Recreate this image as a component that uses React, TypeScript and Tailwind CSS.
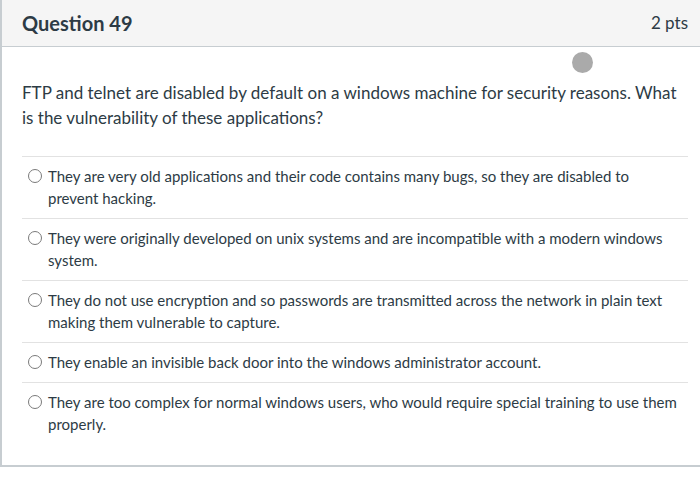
const options = [
  "They are very old applications and their code contains many bugs, so they are disabled to prevent hacking.",
  "They were originally developed on unix systems and are incompatible with a modern windows system.",
  "They do not use encryption and so passwords are transmitted across the network in plain text making them vulnerable to capture.",
  "They enable an invisible back door into the windows administrator account.",
  "They are too complex for normal windows users, who would require special training to use them properly.",
]

export default function App() {
  return (
    <main className="h-[494px] w-[700px] overflow-hidden bg-white font-['Lato',sans-serif] text-[#2d3b45]">
      <div className="w-[720px] border-b-2 border-l-2 border-[#c7cdd1]">
        <div className="flex h-[47px] w-[700px] items-center justify-between border-b border-[#c7cdd1] bg-[#f5f5f5] pl-[20px] pr-[14px]">
          <h1 className="text-[20px] font-bold">Question 49</h1>
          <span className="text-[17px]">2 pts</span>
        </div>

        <div className="relative pl-[20px] pr-[32px] pb-[21px]">
          <div className="absolute left-[570px] top-[5px] h-[21px] w-[21px] rounded-full bg-[#aaaaaa]" />
          <p className="w-[666px] pt-[33px] text-[17px] leading-[25px]">
            FTP and telnet are disabled by default on a windows machine for security reasons. What is the
            vulnerability of these applications?
          </p>

          <div className="mt-[26px] w-[666px]">
            {options.map((opt, i) => (
              <div key={i} className="flex gap-[6px] border-t border-[#e2e2e2] pl-[6px] pt-[8px] pb-[9px]">
                <span className="mt-[4px] h-[14px] w-[14px] shrink-0 rounded-full border-[1.5px] border-[#7a7a7a]" />
                <span className="w-[632px] text-[15px] leading-[22px]">{opt}</span>
              </div>
            ))}
          </div>
        </div>
      </div>
    </main>
  )
}
